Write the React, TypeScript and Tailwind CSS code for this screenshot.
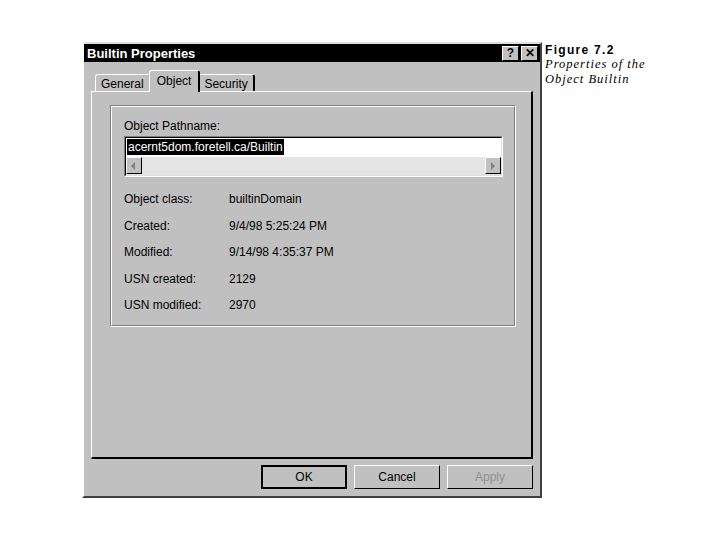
import React from "react";

// Win95-style property sheet for the "Builtin" object, with a figure caption beside it.

const rows: [string, string][] = [
  ["Object class:", "builtinDomain"],
  ["Created:", "9/4/98 5:25:24 PM"],
  ["Modified:", "9/14/98 4:35:37 PM"],
  ["USN created:", "2129"],
  ["USN modified:", "2970"],
];

function TitleButton({ children }: { children: React.ReactNode }) {
  return (
    <div className="w-[17px] h-[15px] bg-[#c0c0c0] border border-t-white border-l-white border-r-black border-b-black flex items-center justify-center text-black text-[12px] font-bold leading-none">
      {children}
    </div>
  );
}

function Tab({ label, active }: { label: string; active?: boolean }) {
  if (active) {
    return (
      <div className="relative z-10 -mx-[2px] h-[22px] px-[7px] pt-[2px] bg-[#c0c0c0] border-t border-l border-t-white border-l-white border-r-2 border-r-black rounded-t-[3px] text-[12px] leading-[16px] text-black">
        {label}
      </div>
    );
  }
  return (
    <div className="mt-[4px] h-[18px] px-[5px] pt-[2px] bg-[#c0c0c0] border-t border-l border-t-white border-l-white border-r-2 border-r-black rounded-t-[3px] text-[12px] leading-[14px] text-black">
      {label}
    </div>
  );
}

function ScrollArrow({ dir }: { dir: "left" | "right" }) {
  return (
    <div className="w-[16px] h-[17px] bg-[#c0c0c0] border border-t-white border-l-white border-r-black border-b-black flex items-center justify-center">
      <svg width="6" height="8" viewBox="0 0 6 8">
        {dir === "left" ? (
          <path d="M4 0 L0 4 L4 8 Z" fill="#808080" />
        ) : (
          <path d="M1 0 L5 4 L1 8 Z" fill="#808080" />
        )}
      </svg>
    </div>
  );
}

function Button({ label, isDefault, disabled }: { label: string; isDefault?: boolean; disabled?: boolean }) {
  return (
    <div
      className={`w-[86px] h-[24px] bg-[#c0c0c0] flex items-center justify-center text-[12px] ${
        isDefault ? "border-2 border-black" : "border border-t-white border-l-white border-r-black border-b-black"
      } ${disabled ? "text-[#909090]" : "text-black"}`}
    >
      {label}
    </div>
  );
}

export default function App() {
  return (
    <div className="w-[720px] h-[540px] bg-white flex items-start" style={{ fontFamily: '"Liberation Sans", Arial, sans-serif' }}>
      {/* dialog */}
      <div className="ml-[82px] mt-[42px] w-[460px] h-[456px] bg-[#c0c0c0] border-2 border-t-[#dfdfdf] border-l-white border-r-[#404040] border-b-[#404040] flex flex-col">
        {/* title bar */}
        <div className="h-[18px] bg-black flex items-center justify-between pl-[3px] pr-[2px]">
          <span className="text-white font-bold text-[13px] leading-none">Builtin Properties</span>
          <div className="flex gap-[2px]">
            <TitleButton>?</TitleButton>
            <TitleButton>✕</TitleButton>
          </div>
        </div>

        <div className="flex flex-col px-[7px] pt-[8px]">
          {/* tabs */}
          <div className="flex items-start pl-[4px] h-[22px]">
            <Tab label="General" />
            <Tab label="Object" active />
            <Tab label="Security" />
          </div>

          {/* tab panel */}
          <div className="-mt-px w-[442px] h-[368px] border border-t-white border-l-white border-r-2 border-b-2 border-r-black border-b-black pl-[18px] pr-[15px] pt-[13px]">
            {/* group box */}
            <div className="h-[222px] border border-t-[#808080] border-l-[#808080] border-r-white border-b-white">
              <div className="h-full border border-t-white border-l-white border-r-[#808080] border-b-[#808080] pl-[12px] pr-[12px] pt-[12px]">
                <div className="text-[12px] leading-[14px] text-black">Object Pathname:</div>
                <div className="mt-[3px] w-[379px] h-[41px] border border-t-[#808080] border-l-[#808080] border-r-white border-b-white">
                  <div className="h-full border border-t-black border-l-black border-r-[#dfdfdf] border-b-[#dfdfdf] bg-white flex flex-col">
                    <div className="h-[19px] pl-[1px] pt-[1px] flex items-start">
                      <span className="bg-black text-white text-[12px] leading-[16px] px-[1px]">
                        acernt5dom.foretell.ca/Builtin
                      </span>
                    </div>
                    <div className="flex-1 flex bg-[#e4e4e4]">
                      <ScrollArrow dir="left" />
                      <div className="flex-1" />
                      <ScrollArrow dir="right" />
                    </div>
                  </div>
                </div>

                <div className="mt-[15px] flex flex-col gap-[12.6px]">
                  {rows.map(([k, v]) => (
                    <div key={k} className="flex text-[12px] leading-[14px] text-black">
                      <span className="w-[105px]">{k}</span>
                      <span>{v}</span>
                    </div>
                  ))}
                </div>
              </div>
            </div>
          </div>

          {/* buttons */}
          <div className="mt-[6px] flex justify-end gap-[7px]">
            <Button label="OK" isDefault />
            <Button label="Cancel" />
            <Button label="Apply" disabled />
          </div>
        </div>
      </div>

      {/* figure caption */}
      <div className="ml-[3px] mt-[43px] text-black">
        <div className="text-[12px] font-bold tracking-[1.3px] leading-[14px]" style={{ fontFamily: '"Liberation Sans", Arial, sans-serif' }}>
          Figure 7.2
        </div>
        <div className="italic text-[12.5px] leading-[15px] tracking-[1px]" style={{ fontFamily: '"Liberation Serif", "Times New Roman", serif' }}>
          Properties of the
          <br />
          Object Builtin
        </div>
      </div>
    </div>
  );
}
